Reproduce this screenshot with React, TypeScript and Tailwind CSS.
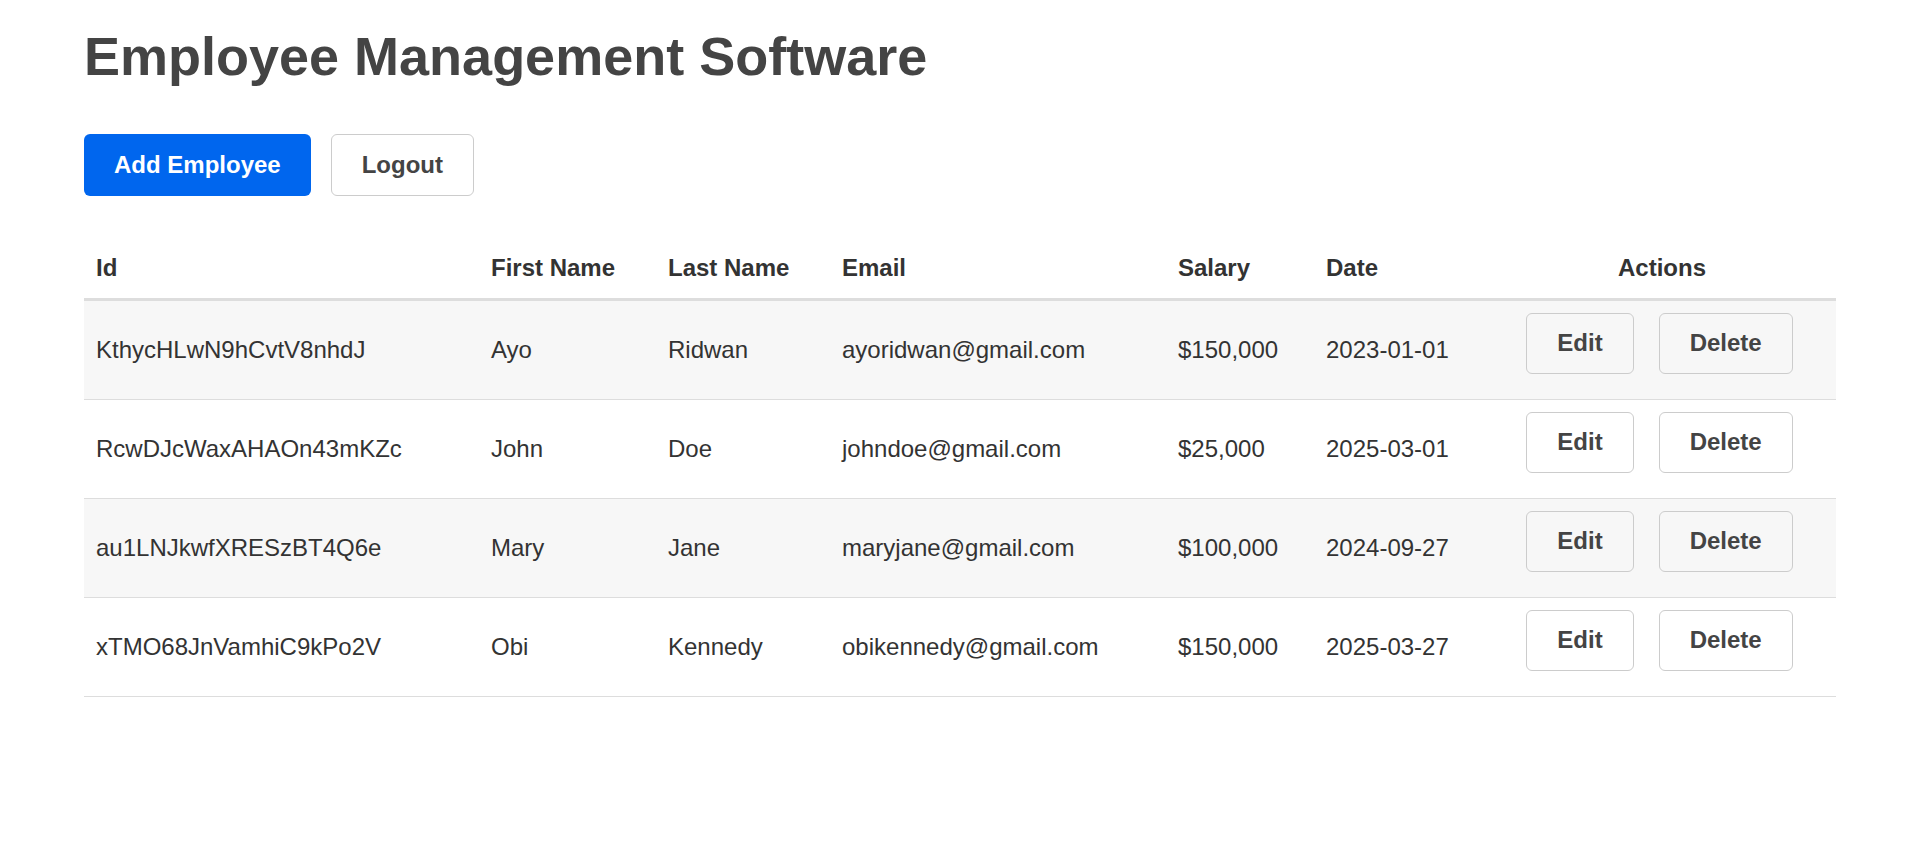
import React from "react";

type Employee = {
  id: string;
  firstName: string;
  lastName: string;
  email: string;
  salary: string;
  date: string;
};

const employees: Employee[] = [
  { id: "KthycHLwN9hCvtV8nhdJ", firstName: "Ayo", lastName: "Ridwan", email: "ayoridwan@gmail.com", salary: "$150,000", date: "2023-01-01" },
  { id: "RcwDJcWaxAHAOn43mKZc", firstName: "John", lastName: "Doe", email: "johndoe@gmail.com", salary: "$25,000", date: "2025-03-01" },
  { id: "au1LNJkwfXRESzBT4Q6e", firstName: "Mary", lastName: "Jane", email: "maryjane@gmail.com", salary: "$100,000", date: "2024-09-27" },
  { id: "xTMO68JnVamhiC9kPo2V", firstName: "Obi", lastName: "Kennedy", email: "obikennedy@gmail.com", salary: "$150,000", date: "2025-03-27" },
];

const cols = "grid grid-cols-[395px_177px_174px_336px_148px_174px_348px]";

const App = () => {
  return (
    <div
      className="min-h-screen bg-white px-[84px] text-[24px] leading-[1.15] text-[#333]"
      style={{ fontFamily: '"Liberation Sans", Arial, sans-serif' }}
    >
      <h1 className="pt-[25px] text-[54px] leading-[62px] font-bold text-[#444]">
        Employee Management Software
      </h1>

      <div className="mt-[47px] flex gap-[20px]">
        <button className="h-[62px] rounded-[6px] bg-[#0066ee] px-[30px] font-bold text-white">
          Add Employee
        </button>
        <button className="h-[62px] rounded-[6px] border border-[#cccccc] bg-white px-[30px] font-bold text-[#444]">
          Logout
        </button>
      </div>

      <div className="mt-[38px] w-[1752px]">
        <div className={`${cols} border-b-[3px] border-[#dddddd] font-bold`}>
          <div className="px-[12px] pt-[20px] pb-[16px]">Id</div>
          <div className="px-[12px] pt-[20px] pb-[16px]">First Name</div>
          <div className="px-[12px] pt-[20px] pb-[16px]">Last Name</div>
          <div className="px-[12px] pt-[20px] pb-[16px]">Email</div>
          <div className="px-[12px] pt-[20px] pb-[16px]">Salary</div>
          <div className="px-[12px] pt-[20px] pb-[16px]">Date</div>
          <div className="px-[12px] pt-[20px] pb-[16px] text-center">Actions</div>
        </div>

        {employees.map((emp, i) => (
          <div
            key={emp.id}
            className={`${cols} h-[99px] border-b border-[#dddddd] ${i % 2 === 0 ? "bg-[#f7f7f7]" : "bg-white"}`}
          >
            <div className="flex items-center px-[12px]">{emp.id}</div>
            <div className="flex items-center px-[12px]">{emp.firstName}</div>
            <div className="flex items-center px-[12px]">{emp.lastName}</div>
            <div className="flex items-center px-[12px]">{emp.email}</div>
            <div className="flex items-center px-[12px]">{emp.salary}</div>
            <div className="flex items-center px-[12px]">{emp.date}</div>
            <div className="flex items-start justify-center gap-[25px] pt-[12px] pr-[5px]">
              <button className="h-[61px] rounded-[6px] border border-[#cccccc] px-[30px] font-bold text-[#444]">
                Edit
              </button>
              <button className="h-[61px] rounded-[6px] border border-[#cccccc] px-[30px] font-bold text-[#444]">
                Delete
              </button>
            </div>
          </div>
        ))}
      </div>
    </div>
  );
};

export default App;
